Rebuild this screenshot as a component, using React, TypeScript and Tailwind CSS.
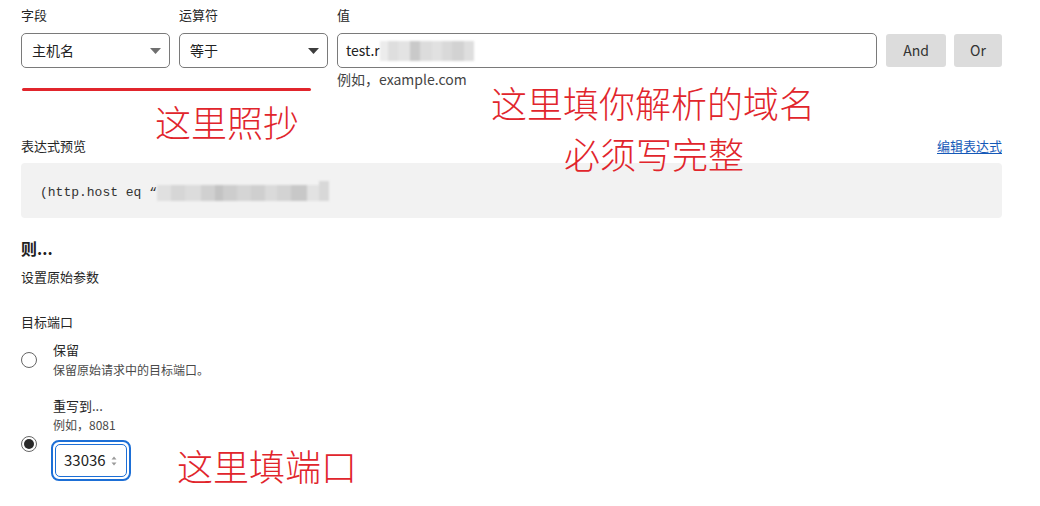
import React from 'react'

const inputBlur = [
  { w: 8, c: '#ececec' },
  { w: 10, c: '#dedede' },
  { w: 12, c: '#e3e3e3' },
  { w: 10, c: '#c9c9c9' },
  { w: 12, c: '#dcdcdc' },
  { w: 10, c: '#e1e1e1' },
  { w: 10, c: '#d9d9d9' },
  { w: 12, c: '#d2d2d2' },
  { w: 10, c: '#dedede' },
]

const previewBlur = [
  { w: 14, c: '#e0e0e0' },
  { w: 14, c: '#d6d6d6' },
  { w: 16, c: '#dcdcdc' },
  { w: 14, c: '#d0d0d0' },
  { w: 8, c: '#c3c3c3' },
  { w: 14, c: '#cdcdcd' },
  { w: 14, c: '#d5d5d5' },
  { w: 14, c: '#cfcfcf' },
  { w: 12, c: '#dadada' },
  { w: 14, c: '#d3d3d3' },
  { w: 16, c: '#c8c8c8' },
  { w: 12, c: '#e2e2e2' },
]

function Caret({ dark }: { dark?: boolean }) {
  return (
    <svg width="11" height="6" viewBox="0 0 11 6">
      <path d="M0 0 L11 0 L5.5 6 Z" fill={dark ? '#3d3d3d' : '#6f6f6f'} />
    </svg>
  )
}

function Select({ value, dark }: { value: string; dark?: boolean }) {
  return (
    <div className="h-[35px] border border-[#7a7a7a] rounded-[5px] flex items-center justify-between pl-[10px] pr-[8px] text-[14px] text-[#222]">
      <span>{value}</span>
      <Caret dark={dark} />
    </div>
  )
}

function Radio({ checked }: { checked?: boolean }) {
  return (
    <div className="w-[16px] h-[16px] rounded-full border border-[#666] bg-white flex items-center justify-center shrink-0">
      {checked && <div className="w-[10px] h-[10px] rounded-full bg-[#2a2a2a]" />}
    </div>
  )
}

export default function App() {
  return (
    <div
      className="relative w-[1040px] h-[506px] overflow-hidden bg-white text-[#262626] pl-[21px] pr-[38px]"
      style={{ fontFamily: '"Noto Sans CJK SC", "Noto Sans", sans-serif' }}
    >
      {/* Condition row */}
      <div className="flex gap-[9px] pt-[6px]">
        <div className="w-[149px] flex flex-col">
          <div className="text-[13px] leading-[18px] mb-[9px]">字段</div>
          <Select value="主机名" />
        </div>
        <div className="w-[149px] flex flex-col">
          <div className="text-[13px] leading-[18px] mb-[9px]">运算符</div>
          <Select value="等于" dark />
        </div>
        <div className="flex-1 flex flex-col">
          <div className="text-[13px] leading-[18px] mb-[9px]">值</div>
          <div className="h-[35px] border border-[#7a7a7a] rounded-[5px] flex items-center pl-[8px] text-[14px] text-[#222]">
            <span>test.r</span>
            <div className="flex h-[20px] blur-[1px]">
              {inputBlur.map((b, i) => (
                <div key={i} style={{ width: b.w, background: b.c }} />
              ))}
            </div>
          </div>
          <div className="mt-[2px] text-[14px] leading-[18px] text-[#444]">例如，example.com</div>
        </div>
        <div className="flex gap-[8px] pt-[28px]">
          <button className="w-[60px] h-[33px] rounded-[3px] bg-[#dcdcdc] text-[14px] text-[#333]">And</button>
          <button className="w-[48px] h-[33px] rounded-[3px] bg-[#dcdcdc] text-[14px] text-[#333]">Or</button>
        </div>
      </div>

      {/* Expression preview */}
      <div className="mt-[49px] flex justify-between items-center text-[13px] leading-[18px]">
        <span>表达式预览</span>
        <span className="text-[#1559b8] underline underline-offset-2">编辑表达式</span>
      </div>
      <div className="mt-[8px] h-[55px] rounded-[4px] bg-[#f2f2f2] flex items-center pl-[19px] pt-[4px]">
        <span className="text-[13px] text-[#333]" style={{ fontFamily: '"Liberation Mono", monospace' }}>
          (http.host eq “
        </span>
        <div className="flex h-[16px] blur-[1px] items-end">
          {previewBlur.map((b, i) => (
            <div key={i} className="h-full" style={{ width: b.w, background: b.c }} />
          ))}
          <div className="w-[10px] h-[20px] bg-[#d8d8d8]" />
        </div>
      </div>

      {/* Then */}
      <div className="mt-[21px] text-[16px] leading-[18px] font-bold text-[#1f1f1f]">则...</div>
      <div className="mt-[11px] text-[13px] leading-[18px]">设置原始参数</div>
      <div className="mt-[27px] text-[13px] leading-[18px]">目标端口</div>

      <div className="mt-[10px] flex gap-[16px]">
        <div className="mt-[11px]">
          <Radio />
        </div>
        <div className="flex flex-col">
          <div className="text-[13px] leading-[18px]">保留</div>
          <div className="mt-[2px] text-[12px] leading-[18px] text-[#4a4a4a]">保留原始请求中的目标端口。</div>
        </div>
      </div>

      <div className="mt-[18px] flex gap-[14px]">
        <div className="mt-[39px]">
          <Radio checked />
        </div>
        <div className="flex flex-col">
          <div className="ml-[2px] text-[13px] leading-[18px]">重写到...</div>
          <div className="ml-[2px] mt-[1px] text-[12px] leading-[18px] text-[#4a4a4a]">例如，8081</div>
          <div className="mt-[6px] w-[80px] h-[41px] rounded-[8px] border-2 border-[#1d6fd6] p-[2px]">
            <div className="h-full rounded-[5px] border border-[#1d6fd6] flex items-center justify-between pl-[8px] pr-[9px]">
              <span className="text-[15px] text-[#222]">33036</span>
              <svg width="6" height="12" viewBox="0 0 6 12">
                <path d="M0.5 4.5 L3 1.5 L5.5 4.5 Z" fill="#9a9a9a" />
                <path d="M0.5 7.5 L3 10.5 L5.5 7.5 Z" fill="#9a9a9a" />
              </svg>
            </div>
          </div>
        </div>
      </div>

      {/* Red annotations */}
      <div className="absolute left-[22px] top-[88px] w-[289px] h-[3px] bg-[#e1252c] rounded-full" />
      <div className="absolute left-[155px] top-[103px] text-[36px] leading-none font-light text-[#e1252c]">这里照抄</div>
      <div className="absolute left-[491px] top-[84px] text-[36px] leading-none font-light text-[#e1252c]">这里填你解析的域名</div>
      <div className="absolute left-[564px] top-[135px] text-[36px] leading-none font-light text-[#e1252c]">必须写完整</div>
      <div className="absolute left-[177px] top-[447px] text-[36px] leading-none font-light text-[#e1252c]">这里填端口</div>
    </div>
  )
}
